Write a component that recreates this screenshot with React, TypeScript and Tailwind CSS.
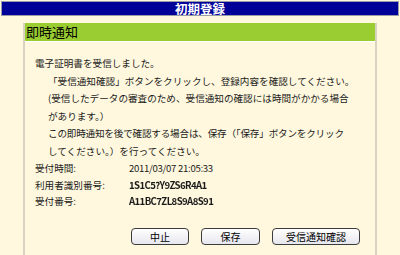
const jp = "font-['Noto_Sans_CJK_JP','MS_PGothic',sans-serif]";

function Btn({ label, w }: { label: string; w: string }) {
  return (
    <button
      className={`${w} h-[17px] rounded-[4px] border border-[#3c3c3c] bg-gradient-to-b from-white to-[#e6e6ee] text-[10px] leading-[15px] text-black`}
    >
      {label}
    </button>
  );
}

export default function App() {
  return (
    <div className={`w-[400px] h-[255px] overflow-hidden bg-[#fff8de] ${jp}`}>
      {/* top title bar */}
      <div className="mx-[1px] mt-[1px] h-[15px] border border-[#9a9aa8] bg-[#000099] text-center text-[12.5px] font-bold leading-[13px] text-white">
        初期登録
      </div>

      {/* panel */}
      <div className="mx-[23px] mt-[7px] border-x-2 border-[#d8d2c0] h-[240px]">
        <div className="h-[18px] bg-[#9acd32] pl-[1px] text-[13px] leading-[18px] text-black">
          即時通知
        </div>
        <div className="border-t border-white pl-[10px] pr-[15px] pt-[13px] text-[9.6px] text-[#1a1a1a]">
          <div className="leading-[17.5px]">
            <p>電子証明書を受信しました。</p>
            <div className="pl-[13px]">
              <p>「受信通知確認」ボタンをクリックし、登録内容を確認してください。</p>
              <p>(受信したデータの審査のため、受信通知の確認には時間がかかる場合</p>
              <p>があります。）</p>
              <p className="tracking-[-0.2px]">この即時通知を後で確認する場合は、保存（「保存」ボタンをクリック</p>
              <p>してください。）を行ってください。</p>
            </div>
          </div>
          <div className="leading-[16.5px]">
            <div className="flex">
              <span className="w-[94px]">受付時間:</span>
              <span className="tracking-[-0.3px]">2011/03/07 21:05:33</span>
            </div>
            <div className="flex">
              <span className="w-[94px]">利用者識別番号:</span>
              <span className="inline-block font-bold tracking-[-0.6px] blur-[0.6px]">1S1C5?Y9ZS6R4A1</span>
            </div>
            <div className="flex">
              <span className="w-[94px]">受付番号:</span>
              <span className="inline-block font-bold tracking-[-0.6px] blur-[0.6px]">A11BC7ZL8S9A8S91</span>
            </div>
          </div>
          <div className="mt-[18px] flex justify-end gap-[12px]">
            <Btn label="中止" w="w-[58px]" />
            <Btn label="保存" w="w-[59px]" />
            <Btn label="受信通知確認" w="w-[88px]" />
          </div>
        </div>
      </div>
    </div>
  );
}
